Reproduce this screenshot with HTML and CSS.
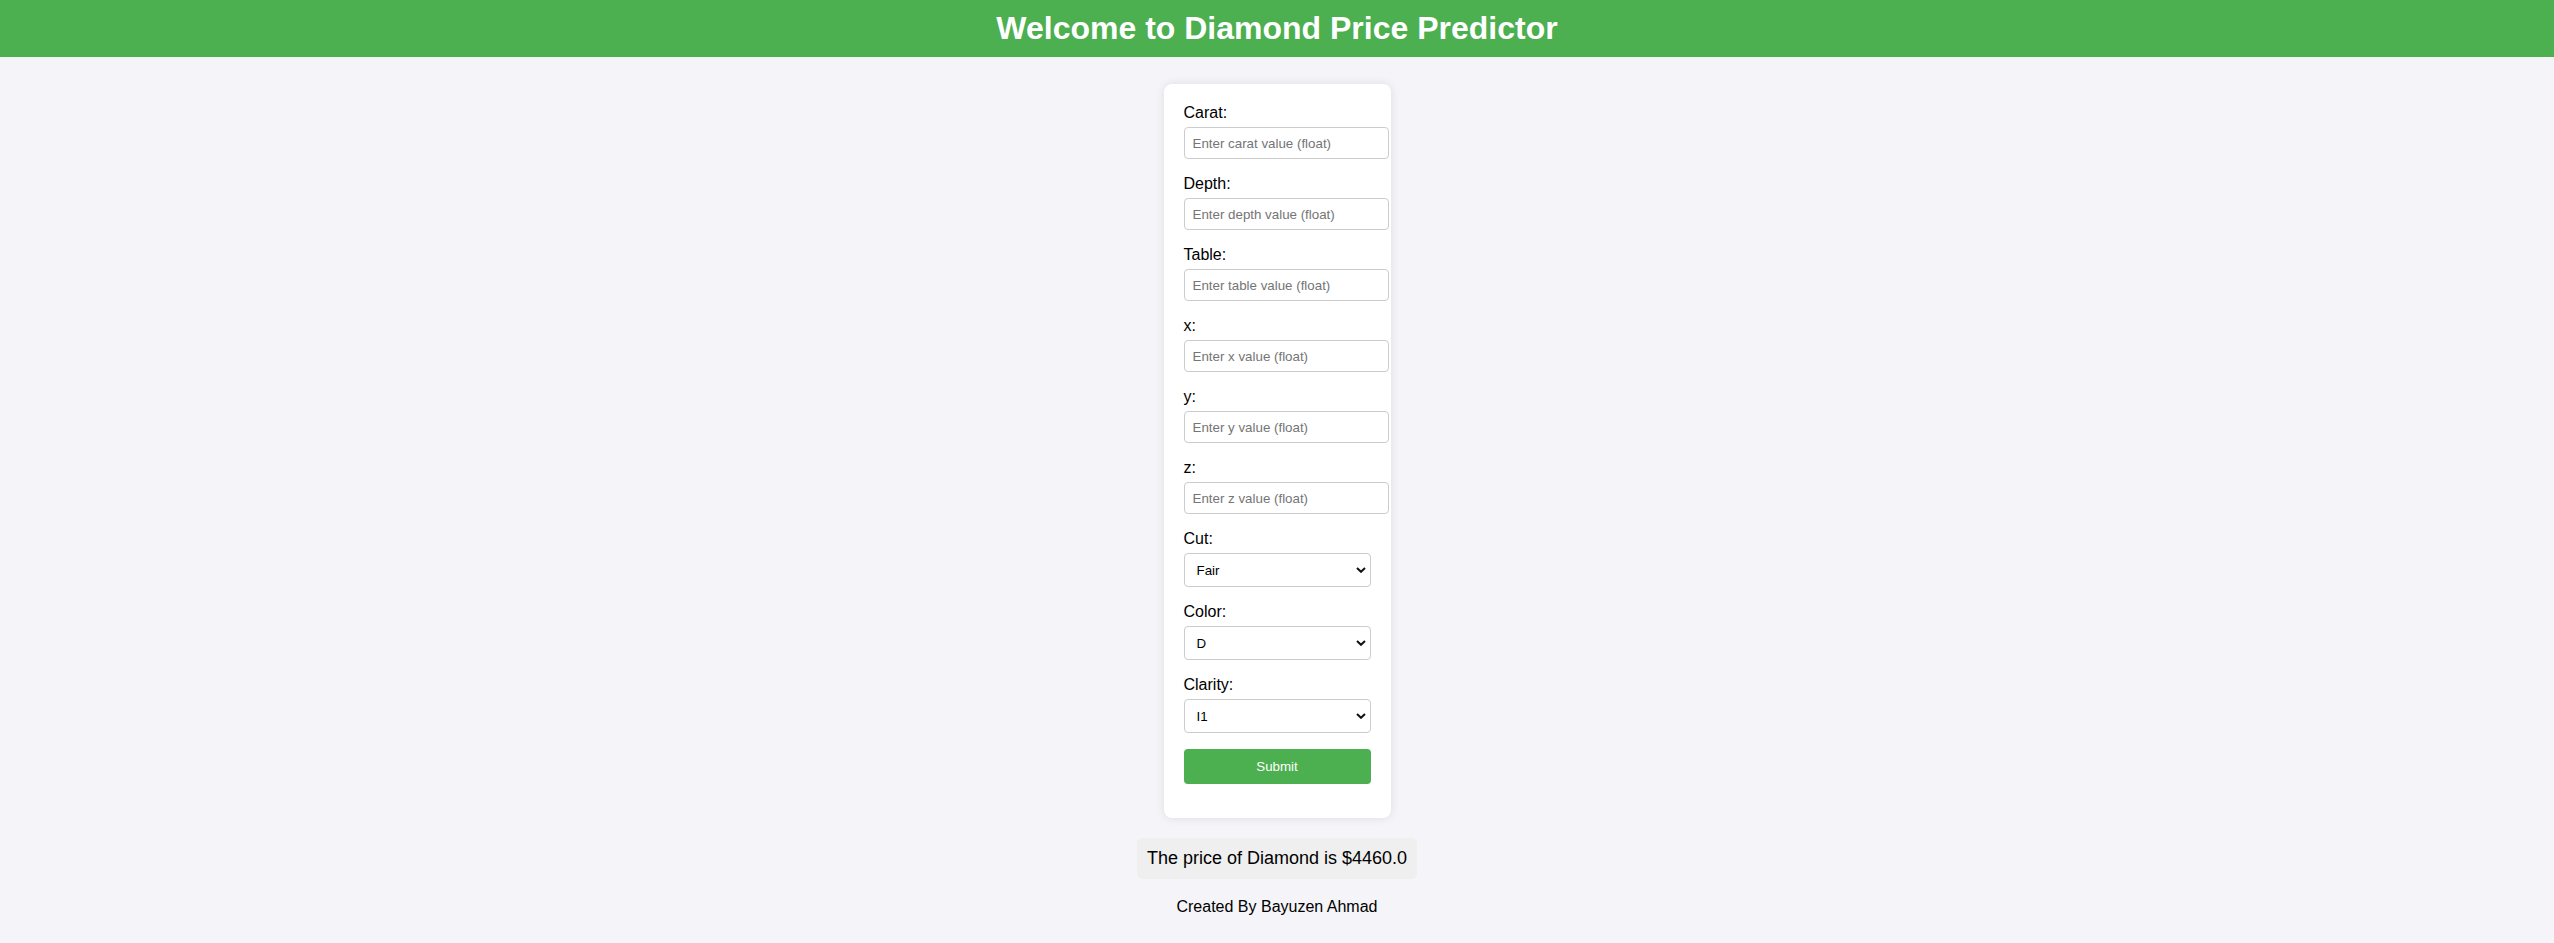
FILE: index.html
```html
<!DOCTYPE html>
<html lang="en">
<head>
<meta charset="utf-8">
<title>Diamond Price Predictor</title>
<link rel="stylesheet" href="styles.css">
</head>
<body>
<header class="site-header">
  <h1 class="site-title">Welcome to Diamond Price Predictor</h1>
</header>
<main class="page">
  <form class="card">
    <div class="field">
      <label class="field-label" for="carat">Carat:</label>
      <input class="text-input" id="carat" type="text" placeholder="Enter carat value (float)">
    </div>
    <div class="field">
      <label class="field-label" for="depth">Depth:</label>
      <input class="text-input" id="depth" type="text" placeholder="Enter depth value (float)">
    </div>
    <div class="field">
      <label class="field-label" for="table">Table:</label>
      <input class="text-input" id="table" type="text" placeholder="Enter table value (float)">
    </div>
    <div class="field">
      <label class="field-label" for="x">x:</label>
      <input class="text-input" id="x" type="text" placeholder="Enter x value (float)">
    </div>
    <div class="field">
      <label class="field-label" for="y">y:</label>
      <input class="text-input" id="y" type="text" placeholder="Enter y value (float)">
    </div>
    <div class="field">
      <label class="field-label" for="z">z:</label>
      <input class="text-input" id="z" type="text" placeholder="Enter z value (float)">
    </div>
    <div class="field">
      <label class="field-label" for="cut">Cut:</label>
      <div class="select-wrap">
        <select class="select-input" id="cut">
          <option>Fair</option><option>Good</option><option>Very Good</option><option>Premium</option><option>Ideal</option>
        </select>
        <svg class="chevron" width="10" height="6" viewBox="0 0 10 6"><path d="M1 1 L5 4.8 L9 1" fill="none" stroke="#111" stroke-width="2"/></svg>
      </div>
    </div>
    <div class="field">
      <label class="field-label" for="color">Color:</label>
      <div class="select-wrap">
        <select class="select-input" id="color">
          <option>D</option><option>E</option><option>F</option><option>G</option><option>H</option><option>I</option><option>J</option>
        </select>
        <svg class="chevron" width="10" height="6" viewBox="0 0 10 6"><path d="M1 1 L5 4.8 L9 1" fill="none" stroke="#111" stroke-width="2"/></svg>
      </div>
    </div>
    <div class="field">
      <label class="field-label" for="clarity">Clarity:</label>
      <div class="select-wrap">
        <select class="select-input" id="clarity">
          <option>I1</option><option>SI2</option><option>SI1</option><option>VS2</option><option>VS1</option><option>VVS2</option><option>VVS1</option><option>IF</option>
        </select>
        <svg class="chevron" width="10" height="6" viewBox="0 0 10 6"><path d="M1 1 L5 4.8 L9 1" fill="none" stroke="#111" stroke-width="2"/></svg>
      </div>
    </div>
    <button class="submit-btn" type="button">Submit</button>
  </form>
  <div class="result">The price of Diamond is $4460.0</div>
  <p class="credit">Created By Bayuzen Ahmad</p>
</main>
</body>
</html>
```
FILE: styles.css
```css
html, body {
  margin: 0;
  padding: 0;
}
body {
  background: #f4f4f9;
  font-family: "Liberation Sans", Arial, sans-serif;
  color: #000;
}
.site-header {
  background: #4caf50;
  padding: 10px 0;
  text-align: center;
}
.site-title {
  margin: 0;
  font-size: 32px;
  font-weight: bold;
  color: #fff;
  line-height: normal;
}
.page {
  display: flex;
  flex-direction: column;
  align-items: center;
  padding-top: 27px;
}
.card {
  width: 187px;
  padding: 20px 20px 34px;
  background: #fff;
  border-radius: 8px;
  box-shadow: 0 0 10px rgba(0, 0, 0, 0.1);
}
.field {
  margin-bottom: 16px;
}
.field-label {
  display: block;
  font-size: 16px;
  line-height: 18px;
  margin-bottom: 5px;
}
.text-input {
  display: block;
  box-sizing: content-box;
  width: 100%;
  height: 14px;
  padding: 8px;
  margin: 0;
  border: 1px solid #ccc;
  border-radius: 4px;
  font-family: "Liberation Sans", Arial, sans-serif;
  font-size: 13.333px;
  color: #000;
  background: #fff;
  outline: none;
}
.text-input::placeholder {
  color: #757575;
}
.select-wrap {
  position: relative;
  width: 187px;
}
.select-input {
  display: block;
  box-sizing: border-box;
  width: 187px;
  height: 34px;
  margin: 0;
  padding: 0 24px 0 12px;
  border: 1px solid #ccc;
  border-radius: 4px;
  background: #fff;
  font-family: "Liberation Sans", Arial, sans-serif;
  font-size: 13.333px;
  color: #000;
  -webkit-appearance: none;
  appearance: none;
}
.chevron {
  position: absolute;
  right: 5px;
  top: 14px;
  pointer-events: none;
}
.submit-btn {
  display: block;
  width: 187px;
  height: 35px;
  margin: 0;
  padding: 0;
  border: none;
  border-radius: 4px;
  background: #4caf50;
  color: #fff;
  font-family: "Liberation Sans", Arial, sans-serif;
  font-size: 13.333px;
}
.result {
  margin-top: 20px;
  padding: 10px;
  background: #efefef;
  border-radius: 5px;
  font-size: 18px;
  line-height: 21px;
}
.credit {
  margin: 19px 0 0;
  font-size: 16px;
  line-height: 18px;
}
```
